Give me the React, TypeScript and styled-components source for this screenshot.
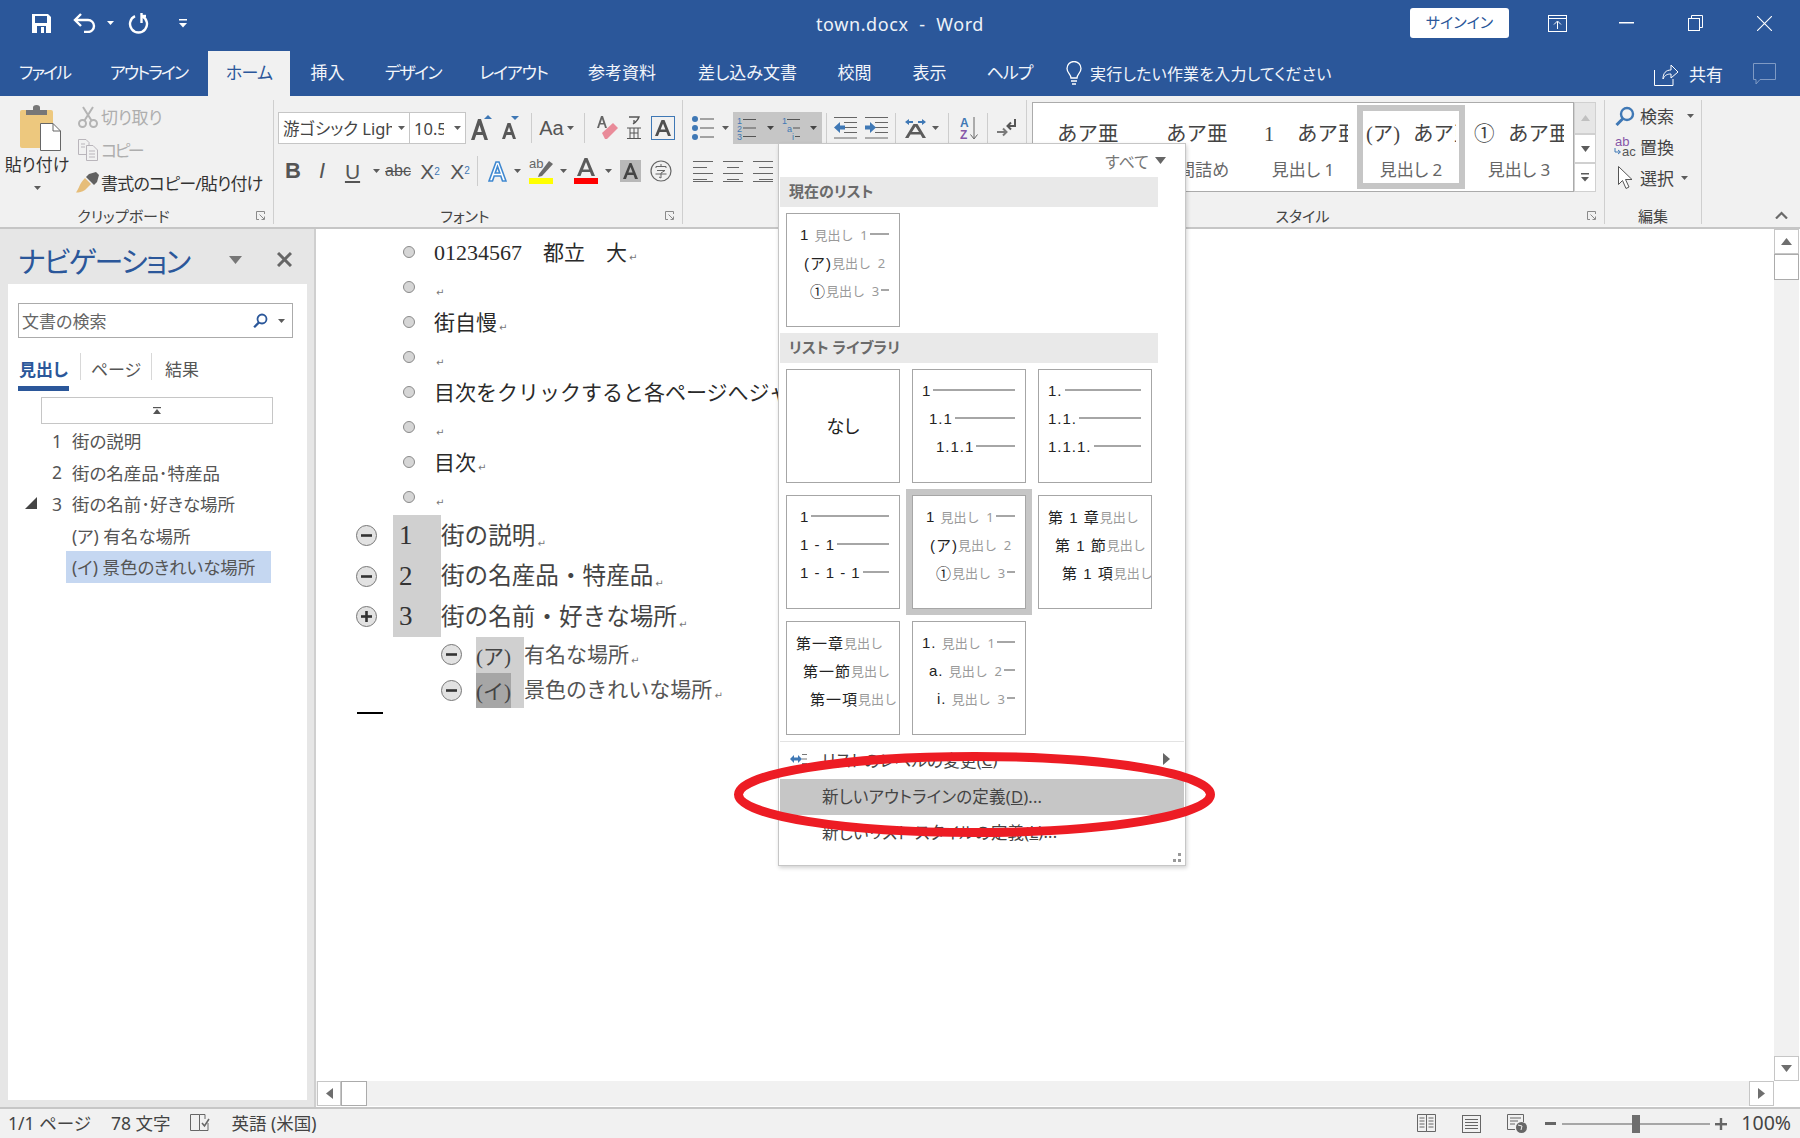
import * as React from 'react';
import styled, { createGlobalStyle } from 'styled-components';

const BLUE = '#2b579a';
const ICON = '#5c5c5c';
const ACCENT = '#3f78b5';
const UI_FONT = '"Noto Sans", "Noto Sans CJK JP", sans-serif';
const DOC_FONT = '"Liberation Serif", "Noto Sans CJK JP", serif';

const Global = createGlobalStyle`
  html, body { margin: 0; padding: 0; background: #fff; }
  body {
    width: 1800px;
    height: 1138px;
    overflow: hidden;
    font-family: ${UI_FONT};
    font-feature-settings: "palt";
    color: #444;
  }
  * { box-sizing: border-box; }
  svg { display: block; flex: none; }
`;

const Window = styled.div`
  position: relative;
  width: 1800px;
  height: 1138px;
  display: flex;
  flex-direction: column;
  overflow: hidden;
`;

/* title bar */
const TitleBar = styled.div`
  height: 51px;
  flex: none;
  background: ${BLUE};
  color: #fff;
  display: grid;
  grid-template-columns: 1fr auto 1fr;
  align-items: start;
`;
const Qat = styled.div`
  display: flex;
  align-items: center;
  height: 46px;
  padding-left: 32px;
`;
const Slot = styled.span<{ $ml?: number }>`
  display: inline-flex;
  flex: none;
  margin-left: ${p => p.$ml ?? 0}px;
`;
const Title = styled.div`
  font-size: 18px;
  line-height: 48px;
  letter-spacing: 0.6px;
  white-space: pre;
  color: #eef2f8;
`;
const WinControls = styled.div`
  display: flex;
  align-items: center;
  justify-content: flex-end;
  height: 46px;
`;
const SignIn = styled.div`
  width: 99px;
  height: 30px;
  margin-right: 39px;
  background: #fff;
  color: ${BLUE};
  border-radius: 3px;
  font-size: 15px;
  line-height: 29px;
  text-align: center;
`;
const WinSlot = styled.span<{ $w: number; $mr: number }>`
  display: inline-flex;
  justify-content: center;
  width: ${p => p.$w}px;
  margin-right: ${p => p.$mr}px;
`;

/* tabs */
const TabBar = styled.div`
  height: 45px;
  flex: none;
  background: ${BLUE};
  display: flex;
  align-items: stretch;
`;
const Tab = styled.div<{ $w: number; $ls: number; $active?: boolean }>`
  width: ${p => p.$w}px;
  flex: none;
  text-align: center;
  font-size: 17px;
  line-height: 43px;
  letter-spacing: ${p => p.$ls}px;
  white-space: nowrap;
  background: ${p => (p.$active ? '#f1f1f1' : 'transparent')};
  color: ${p => (p.$active ? BLUE : '#f2f5fa')};
`;
const TellMe = styled.div`
  display: flex;
  align-items: center;
  gap: 8px;
  margin-left: 14px;
  padding-bottom: 2px;
  font-size: 16px;
  letter-spacing: 0.2px;
  color: #f2f5fa;
  white-space: nowrap;
`;
const ShareArea = styled.div`
  margin-left: auto;
  display: flex;
  align-items: center;
  padding-right: 24px;
  font-size: 17px;
  color: #f2f5fa;
`;

/* ribbon */
const Ribbon = styled.div`
  height: 133px;
  flex: none;
  background: #f1f1f1;
  border-bottom: 2px solid #c6c6c6;
  display: flex;
  align-items: flex-start;
  padding-top: 4px;
`;
const Group = styled.div<{ $w: number }>`
  width: ${p => p.$w}px;
  height: 124px;
  flex: none;
  display: flex;
  flex-direction: column;
  border-right: 1px solid #cfcfcf;
`;
const GroupBody = styled.div`
  height: 105px;
  flex: none;
`;
const GroupFoot = styled.div`
  flex: 1;
  display: flex;
  align-items: center;
  font-size: 15px;
  color: #444;
`;
const GroupLabel = styled.div`
  flex: 1;
  text-align: center;
  white-space: nowrap;
`;
const Launcher = styled.div`
  width: 26px;
  padding-left: 9px;
  display: flex;
`;
const ToolRow = styled.div<{ $mt?: number }>`
  display: flex;
  align-items: center;
  height: 32px;
  margin-top: ${p => p.$mt ?? 0}px;
  white-space: nowrap;
`;
const Tool = styled.span<{ $w: number; $ml?: number; $size?: number; $bold?: boolean; $italic?: boolean }>`
  display: inline-flex;
  align-items: center;
  justify-content: center;
  flex: none;
  width: ${p => p.$w}px;
  margin-left: ${p => p.$ml ?? 0}px;
  font-family: "Liberation Sans", sans-serif;
  font-size: ${p => p.$size ?? 20}px;
  font-weight: ${p => (p.$bold ? 700 : 400)};
  font-style: ${p => (p.$italic ? 'italic' : 'normal')};
  color: #555;
  line-height: 1;
`;
const ToolSub = styled.span`
  font-size: 10px;
  color: ${ACCENT};
  align-self: flex-end;
  margin-bottom: 5px;
`;
const ToolSup = styled.span`
  font-size: 10px;
  color: ${ACCENT};
  align-self: flex-start;
  margin-top: 5px;
`;
const ToolSep = styled.span<{ $ml: number }>`
  flex: none;
  width: 1px;
  height: 30px;
  margin-left: ${p => p.$ml}px;
  background: #cdcdcd;
`;
const SelectBox = styled.div<{ $w: number; $ml?: number }>`
  width: ${p => p.$w}px;
  margin-left: ${p => p.$ml ?? 0}px;
  flex: none;
  height: 32px;
  background: #fff;
  border: 1px solid #c6c6c6;
  display: flex;
  align-items: center;
  padding: 0 4px;
  font-size: 16.5px;
  color: #444;
  overflow: hidden;
`;
const SelectText = styled.span<{ $mr: number }>`
  flex: 1;
  min-width: 0;
  margin-right: ${p => p.$mr}px;
  overflow: hidden;
  white-space: nowrap;
`;
const PressedTools = styled.div`
  flex: none;
  display: flex;
  align-items: center;
  width: 89px;
  height: 32px;
  margin-left: 4px;
  background: #c6c6c6;
`;

const Clipboard = styled(GroupBody)`
  display: flex;
`;
const PasteCol = styled.div`
  width: 74px;
  flex: none;
  padding-top: 5px;
  display: flex;
  flex-direction: column;
  align-items: center;
  font-size: 17px;
  line-height: 24px;
  color: #333;
`;
const PasteIconWrap = styled.div`
  margin-left: 8px;
`;
const PasteLabel = styled.div`
  margin-top: 2px;
  white-space: nowrap;
`;
const PasteCaret = styled.div`
  margin-top: 9px;
`;
const ClipCol = styled.div`
  display: flex;
  flex-direction: column;
`;
const ClipRow = styled.div<{ $off?: boolean; $ls: number }>`
  display: flex;
  align-items: center;
  height: 33px;
  font-size: 17px;
  letter-spacing: ${p => p.$ls}px;
  white-space: nowrap;
  color: ${p => (p.$off ? '#aeaeae' : '#333')};
`;
const ClipIcon = styled.span`
  width: 27px;
  display: inline-flex;
  justify-content: center;
  flex: none;
`;

const Gallery = styled.div`
  display: flex;
  margin: 2px 0 0 5px;
`;
const GalleryItems = styled.div`
  display: grid;
  grid-template-columns: repeat(5, 108px);
  width: 542px;
  height: 90px;
  background: #fff;
  border: 1px solid #ababab;
`;
const StyleCell = styled.div<{ $on?: boolean }>`
  height: 84px;
  margin-top: 2px;
  padding: 0 3px;
  border: 6px solid ${p => (p.$on ? '#c6c6c6' : 'transparent')};
  overflow: hidden;
  text-align: center;
`;
const StylePreview = styled.div<{ $pl: number }>`
  display: flex;
  height: 46px;
  padding-left: ${p => p.$pl}px;
  line-height: 46px;
  font-size: 20.5px;
  font-family: ${DOC_FONT};
  color: #444;
  white-space: pre;
  text-align: left;
  overflow: hidden;
  font-feature-settings: normal;
`;
const StyleMark = styled.span<{ $w: number }>`
  width: ${p => p.$w}px;
  flex: none;
`;
const StyleName = styled.div`
  font-size: 17px;
  line-height: 26px;
  color: #666;
  white-space: nowrap;
`;
const GalleryScroll = styled.div`
  width: 22px;
  display: flex;
  flex-direction: column;
`;
const GalleryBtn = styled.div<{ $h: number; $off?: boolean }>`
  height: ${p => p.$h}px;
  background: ${p => (p.$off ? '#e6e6e6' : '#fff')};
  border: 1px solid #d0d0d0;
  display: flex;
  align-items: center;
  justify-content: center;
`;

const EditCol = styled(GroupBody)`
  padding-left: 8px;
`;
const EditRow = styled.div`
  display: flex;
  align-items: center;
  height: 31px;
  font-size: 17px;
  color: #444;
  white-space: nowrap;
`;
const EditIcon = styled.span`
  width: 24px;
  margin-right: 3px;
  display: inline-flex;
  justify-content: center;
  flex: none;
`;
const Collapse = styled.div`
  flex: 1;
  height: 124px;
  display: flex;
  align-items: flex-end;
  justify-content: flex-end;
  padding: 0 12px 5px 0;
`;

/* body */
const Body = styled.div`
  flex: 1;
  min-height: 0;
  display: flex;
`;
const NavPane = styled.div`
  width: 316px;
  flex: none;
  background: #e6e6e6;
  border-right: 2px solid #cfcfcf;
  display: flex;
  flex-direction: column;
`;
const NavHead = styled.div`
  height: 55px;
  flex: none;
  display: flex;
  align-items: center;
  padding: 6px 0 0 18px;
`;
const NavTitle = styled.div`
  font-size: 29px;
  letter-spacing: -1.9px;
  color: ${BLUE};
  width: 211px;
  white-space: nowrap;
`;
const NavClose = styled.span`
  margin-left: 35px;
  display: inline-flex;
`;
const NavPanel = styled.div`
  flex: 1;
  margin: 0 7px 7px 8px;
  background: #fff;
  padding-top: 19px;
`;
const NavSearch = styled.div`
  width: 275px;
  height: 35px;
  margin-left: 10px;
  border: 1px solid #ababab;
  display: flex;
  align-items: center;
  padding: 0 7px 0 3px;
  font-size: 17px;
  color: #666;
`;
const NavSearchText = styled.span`
  flex: 1;
`;
const NavTabs = styled.div`
  display: flex;
  align-items: stretch;
  margin: 15px 0 0 10px;
  height: 38px;
`;
const NavTab = styled.div<{ $on?: boolean; $w: number }>`
  width: ${p => p.$w}px;
  height: 38px;
  text-align: center;
  font-size: 17px;
  line-height: 33px;
  font-weight: ${p => (p.$on ? 700 : 400)};
  color: ${p => (p.$on ? BLUE : '#555')};
  border-bottom: 5px solid ${p => (p.$on ? BLUE : 'transparent')};
`;
const NavTabSep = styled.span<{ $ml?: number }>`
  width: 1px;
  height: 27px;
  margin-left: ${p => p.$ml ?? 0}px;
  background: #d8d8d8;
`;
const NavScrollUp = styled.div`
  width: 232px;
  height: 27px;
  margin: 6px 0 0 33px;
  border: 1px solid #c6c6c6;
  display: flex;
  align-items: center;
  justify-content: center;
`;
const NavTree = styled.div`
  margin-top: 1px;
`;
const NavItem = styled.div<{ $indent: number; $on?: boolean }>`
  display: flex;
  align-items: center;
  position: relative;
  height: 31.5px;
  margin-left: ${p => p.$indent}px;
  width: ${p => 263 - p.$indent}px;
  padding-left: ${p => (p.$on ? 6 : 0)}px;
  background: ${p => (p.$on ? '#c5d7f1' : 'transparent')};
  font-size: 17.5px;
  color: #555;
  white-space: nowrap;
`;
const NavNum = styled.span`
  width: 20px;
  flex: none;
`;
const NavArrow = styled.span`
  position: absolute;
  left: -27px;
  top: 9px;
  display: inline-flex;
`;

const DocColumn = styled.div`
  flex: 1;
  min-width: 0;
  display: flex;
  flex-direction: column;
`;
const DocArea = styled.div`
  flex: 1;
  min-height: 0;
  display: flex;
`;
const Page = styled.div`
  flex: 1;
  padding-top: 6px;
  font-family: ${DOC_FONT};
  font-feature-settings: normal;
  color: #2a2a2a;
`;
const BodyRow = styled.div`
  display: flex;
  align-items: center;
  height: 35px;
  padding-left: 87px;
  font-size: 21px;
  white-space: pre;
`;
const Bullet = styled.span`
  width: 12px;
  height: 12px;
  flex: none;
  margin: -2px 19px 0 0;
  border-radius: 50%;
  background: #d6d6d6;
  border: 1px solid #8a8a8a;
`;
const RowText = styled.span`
  margin-top: -4px;
`;
const Digits = styled.span`
  font-size: 22px;
`;
const Ret = styled.span`
  font-family: "DejaVu Sans", sans-serif;
  font-size: 10px;
  color: #777;
  align-self: flex-end;
  margin: 0 0 7px 2px;
`;
const HeadRow = styled.div<{ $h: number }>`
  display: flex;
  align-items: center;
  height: ${p => p.$h}px;
  padding-left: 40px;
  font-size: 23.6px;
  color: #444;
  white-space: pre;
`;
const SubRow = styled.div`
  display: flex;
  align-items: center;
  height: 35.5px;
  padding-left: 125px;
  font-size: 21px;
  color: #555;
  white-space: pre;
`;
const Toggle = styled.span`
  width: 21px;
  height: 21px;
  flex: none;
  border-radius: 50%;
  background: #e2e2e2;
  border: 1px solid #777;
  display: inline-flex;
  align-items: center;
  justify-content: center;
`;
const NumBlock = styled.span<{ $w: number; $ml: number }>`
  width: ${p => p.$w}px;
  margin-left: ${p => p.$ml}px;
  height: 100%;
  flex: none;
  background: #d0d0d0;
  display: flex;
  align-items: center;
`;
const HeadNum = styled.span`
  padding-left: 6px;
  font-size: 27px;
  color: #333;
`;
const SubNum = styled.span<{ $dark?: boolean }>`
  width: 35px;
  height: 100%;
  display: flex;
  align-items: center;
  justify-content: center;
  color: #444;
  background: ${p => (p.$dark ? '#a6a6a6' : 'transparent')};
`;
const EndMark = styled.div`
  width: 26px;
  height: 2px;
  margin: 4px 0 0 41px;
  background: #000;
`;

const VScroll = styled.div`
  width: 25px;
  margin-right: 1px;
  flex: none;
  background: #f1f1f1;
  display: flex;
  flex-direction: column;
`;
const ScrollBtn = styled.div<{ $h?: number; $w?: number }>`
  width: ${p => (p.$w ? `${p.$w}px` : '100%')};
  height: ${p => (p.$h ? `${p.$h}px` : '100%')};
  flex: none;
  background: #fff;
  border: 1px solid #c6c6c6;
  display: flex;
  align-items: center;
  justify-content: center;
`;
const ScrollThumb = styled(ScrollBtn)`
  border-color: #ababab;
`;
const Track = styled.div`
  flex: 1;
`;
const HScroll = styled.div`
  height: 25px;
  flex: none;
  background: #f1f1f1;
  margin-bottom: 1px;
  display: flex;
  padding-left: 1px;
`;
const HEnd = styled.div`
  width: 26px;
  flex: none;
  background: #fff;
`;

/* status bar */
const StatusBar = styled.div`
  height: 31px;
  flex: none;
  background: #f1f1f1;
  border-top: 2px solid #c6c6c6;
  display: flex;
  align-items: center;
  font-size: 17.5px;
  color: #444;
  white-space: pre;
`;
const StatusText = styled.span<{ $ml: number }>`
  margin: -3px 0 0 ${p => p.$ml}px;
  flex: none;
`;
const StatusIcon = styled.span<{ $ml: number }>`
  margin-left: ${p => p.$ml}px;
  display: inline-flex;
  flex: none;
`;
const StatusRight = styled.div`
  margin-left: auto;
  display: flex;
  align-items: center;
  padding-right: 9px;
`;
const ZoomTrack = styled.div`
  width: 148px;
  height: 2px;
  margin-left: 6px;
  background: #a6a6a6;
  position: relative;
  flex: none;
`;
const ZoomThumb = styled.span`
  position: absolute;
  left: 70px;
  top: -8px;
  width: 8px;
  height: 18px;
  background: #6e6e6e;
`;
const ZoomLabel = styled.span`
  margin: -2px 0 0 14px;
  font-size: 19.5px;
  flex: none;
`;

/* dropdown */
const Menu = styled.div`
  position: absolute;
  left: 778px;
  top: 143px;
  width: 408px;
  height: 723px;
  background: #fff;
  border: 1px solid #c6c6c6;
  box-shadow: 1px 2px 4px rgba(0, 0, 0, 0.18);
  display: flex;
  flex-direction: column;
  z-index: 5;
`;
const MenuFilter = styled.div`
  height: 33px;
  flex: none;
  display: flex;
  align-items: center;
  justify-content: flex-end;
  gap: 6px;
  padding-right: 19px;
  font-size: 16px;
  color: #777;
`;
const MenuHeader = styled.div<{ $mt?: number }>`
  width: 378px;
  height: 30px;
  flex: none;
  margin: ${p => p.$mt ?? 0}px 0 0 1px;
  padding-left: 9px;
  background: #e9e9e9;
  font-size: 15px;
  line-height: 29px;
  font-weight: 700;
  color: #6a6a6a;
`;
const ThumbGrid = styled.div`
  display: grid;
  grid-template-columns: repeat(3, 114px);
  grid-auto-rows: 114px;
  gap: 12px;
  margin: 6px 0 0 7px;
`;
const Thumb = styled.div<{ $on?: boolean }>`
  border: 1px solid #a6a6a6;
  outline: ${p => (p.$on ? '6px solid #c6c6c6' : 'none')};
  padding-top: 6px;
  overflow: hidden;
`;
const ThumbNone = styled(Thumb)`
  padding: 0 0 2px;
  display: flex;
  align-items: center;
  justify-content: center;
  font-size: 18px;
  color: #222;
`;
const ThumbRow = styled.div<{ $indent: number }>`
  display: flex;
  align-items: center;
  height: 28px;
  padding: 0 10px 0 ${p => p.$indent}px;
  white-space: pre;
  overflow: hidden;
  color: #222;
  font-feature-settings: normal;
`;
const ThumbNum = styled.span`
  font-family: "Liberation Sans", "Noto Sans CJK JP", sans-serif;
  font-size: 15px;
  letter-spacing: 1px;
  flex: none;
`;
const ThumbText = styled.span`
  color: #9a9a9a;
  font-size: 13px;
  flex: none;
`;
const ThumbLine = styled.span`
  flex: 1;
  min-width: 0;
  height: 2px;
  margin-left: 2px;
  background: #a6a6a6;
`;
const MenuDivider = styled.div`
  height: 1px;
  flex: none;
  margin: 6px 1px 0;
  background: #e3e3e3;
`;
const MenuItem = styled.div<{ $on?: boolean; $h: number }>`
  height: ${p => p.$h}px;
  flex: none;
  margin: 0 1px;
  display: flex;
  align-items: center;
  padding: 0 0 2px 42px;
  position: relative;
  font-size: 16.5px;
  letter-spacing: 0.2px;
  color: #444;
  white-space: nowrap;
  background: ${p => (p.$on ? '#c6c6c6' : 'transparent')};
`;
const MenuItemIcon = styled.span`
  position: absolute;
  left: 10px;
  top: 11px;
  display: inline-flex;
`;
const MenuItemArrow = styled.span`
  position: absolute;
  right: 14px;
  top: 11px;
  display: inline-flex;
`;
const MenuGrip = styled.div`
  flex: 1;
  display: flex;
  align-items: flex-end;
  justify-content: flex-end;
  padding: 0 4px 3px 0;
`;
const Underlined = styled.span`
  text-decoration: underline;
`;
const RedCircle = styled.svg`
  position: absolute;
  left: 730px;
  top: 748px;
  z-index: 6;
  pointer-events: none;
`;

/* icons */
const Caret = ({ w = 7, color = ICON, up, side }: { w?: number; color?: string; up?: boolean; side?: 'l' | 'r' }) => {
  const h = Math.ceil(w * 0.57);
  if (side) {
    return (
      <svg width={h} height={w} viewBox={`0 0 ${h} ${w}`}>
        <path d={side === 'r' ? `M0 0L${h} ${w / 2}L0 ${w}z` : `M${h} 0L0 ${w / 2}L${h} ${w}z`} fill={color} />
      </svg>
    );
  }
  return (
    <svg width={w} height={h} viewBox={`0 0 ${w} ${h}`}>
      <path d={up ? `M0 ${h}L${w / 2} 0L${w} ${h}z` : `M0 0H${w}L${w / 2} ${h}z`} fill={color} />
    </svg>
  );
};

const LauncherIcon = () => (
  <svg width="9" height="9" viewBox="0 0 9 9" fill="none" stroke="#8a8a8a">
    <path d="M8.5 3V0.5H0.5V8.5H3" />
    <path d="M3.5 3.5L8 8M8.5 5.5V8.5H5.5" />
  </svg>
);

const SaveIcon = () => (
  <svg width="19" height="19" viewBox="0 0 19 19">
    <path fill="#fff" d="M0 0H16L19 3V19H0z" />
    <rect x="3" y="2" width="12" height="7" fill={BLUE} />
    <rect x="5" y="12" width="9" height="7" fill={BLUE} />
    <rect x="9" y="13" width="3" height="6" fill="#fff" />
  </svg>
);
const UndoIcon = () => (
  <svg width="23" height="20" viewBox="0 0 23 20" fill="none" stroke="#fff" strokeWidth="2.4">
    <path d="M8 1L2 7L8 13" />
    <path d="M2 7H15a6 6 0 0 1 0 12H11" />
  </svg>
);
const RedoIcon = () => (
  <svg width="21" height="21" viewBox="0 0 21 21" fill="none" stroke="#fff" strokeWidth="2.4">
    <path d="M14 3.2A8.5 8.5 0 1 1 7 3.2" />
    <path d="M13.5 0V10" />
    <path d="M13 3H18" />
  </svg>
);
const MoreIcon = ({ color = '#fff' }: { color?: string }) => (
  <svg width="8" height="9" viewBox="0 0 8 9" fill={color}>
    <rect width="8" height="1.5" />
    <path d="M0 4H8L4 8.5z" />
  </svg>
);
const RibbonDisplay = () => (
  <svg width="19" height="17" viewBox="0 0 19 17" fill="none" stroke="#fff">
    <rect x="0.5" y="0.5" width="18" height="16" />
    <path d="M0 3.5H19M9.5 14V6.5M6 9.5L9.5 6L13 9.5" />
  </svg>
);
const Minimize = () => (
  <svg width="15" height="2" viewBox="0 0 15 2">
    <rect width="15" height="1.5" fill="#fff" />
  </svg>
);
const Restore = () => (
  <svg width="15" height="16" viewBox="0 0 15 16" fill="none" stroke="#fff">
    <rect x="0.5" y="3.5" width="11" height="12" />
    <path d="M3.5 3.5V0.5H14.5V12.5H11.5" />
  </svg>
);
const CloseIcon = () => (
  <svg width="15" height="15" viewBox="0 0 15 15" stroke="#fff" strokeWidth="1.1">
    <path d="M0 0L15 15M15 0L0 15" />
  </svg>
);
const Bulb = () => (
  <svg width="16" height="24" viewBox="0 0 16 24" fill="none" stroke="#fff" strokeWidth="1.3">
    <path d="M5 17C5 13 1 12 1 7.5a7 7 0 0 1 14 0C15 12 11 13 11 17z" />
    <path d="M5 20H11M6 23H10" />
  </svg>
);
const ShareIcon = () => (
  <svg width="25" height="24" viewBox="0 0 25 24" fill="none" stroke="#fff" strokeWidth="1">
    <path d="M0.5 8V23.5H19V17" />
    <path d="M9 17C9 11 12 8 17 8V3L24 10L17 16V12C13 12 11 13 9 17z" />
  </svg>
);
const CommentIcon = () => (
  <svg width="23" height="22" viewBox="0 0 23 22" fill="none" stroke="#7f9ac4" strokeWidth="1">
    <path d="M0.5 0.5H22.5V16.5H7L3 21V16.5H0.5z" />
  </svg>
);

const ClipboardIcon = () => (
  <svg width="42" height="46" viewBox="0 0 42 46">
    <rect x="0" y="5" width="33" height="38" rx="2" fill="#edc87e" />
    <path d="M6 5H13V2.5a3.5 2.5 0 0 1 7 0V5H27V10H6z" fill="#777" />
    <path d="M20.5 18.5H33L40.5 26V45.5H20.5z" fill="#fff" stroke="#666" />
    <path d="M33 18.5V26H40.5" fill="none" stroke="#666" />
  </svg>
);
const ScissorsIcon = () => (
  <svg width="20" height="22" viewBox="0 0 20 22" fill="none" stroke="#b4b4b4" strokeWidth="2">
    <circle cx="4.5" cy="17.5" r="3.5" />
    <circle cx="15.5" cy="17.5" r="3.5" />
    <path d="M6.5 14.5L15 1M13.5 14.5L5 1" />
  </svg>
);
const CopyIcon = () => (
  <svg width="20" height="22" viewBox="0 0 20 22" fill="#f1f1f1" stroke="#b9b5bb">
    <path d="M0.5 0.5H8L11 3.5V15.5H0.5z" />
    <path d="M8.5 6.5H15L19.5 11V21.5H8.5z" />
    <path d="M3 5H7M3 8H7M11 12H17M11 15H17M11 18H17" />
  </svg>
);
const BrushIcon = () => (
  <svg width="23" height="21" viewBox="0 0 23 21">
    <path d="M9 6L15 12L9 18C6 20 3 20.5 0 20.5C3 17 3 12 9 6z" fill="#e6bd79" />
    <path d="M10 5L13 2L20 0L23 3L21 10L18 13z" fill="#616161" />
  </svg>
);
const GrowIcon = () => (
  <svg width="24" height="26" viewBox="0 0 24 26">
    <path d="M0 25L7 4H10L17 25H13.5L11.8 20H5.2L3.5 25zM6.3 17H10.7L8.5 10z" fill="#585858" />
    <path d="M13 4L17 0L21 4z" fill={ACCENT} />
  </svg>
);
const ShrinkIcon = () => (
  <svg width="20" height="24" viewBox="0 0 20 24">
    <path d="M0 23L5.5 7H8.5L14 23H11L9.6 19H4.4L3 23zM5.3 16H8.7L7 11z" fill="#585858" />
    <path d="M9 0H17L13 4z" fill={ACCENT} />
  </svg>
);
const EraserIcon = () => (
  <svg width="22" height="26" viewBox="0 0 22 26">
    <path d="M1 13L5 1H7L11 13H9L8 9.5H4L3 13zM4.7 8H7.3L6 4z" fill="#666" />
    <path d="M6 18L17 8L22 13L11 24H9z" fill="#e98b99" />
  </svg>
);
const FuriganaIcon = () => (
  <svg width="14" height="24" viewBox="0 0 14 24" fill="none" stroke="#555" strokeWidth="1">
    <path d="M2 1H12C11 4 9 6 6 8M7 4V7" strokeWidth="1.3" />
    <path d="M0 12H14M0 22.5H14M3 12V22M11 12V22M7 12V22M3 17H11" />
  </svg>
);
const TextBorderIcon = () => (
  <svg width="24" height="24" viewBox="0 0 24 24">
    <rect x="0.5" y="0.5" width="23" height="23" fill="none" stroke={ACCENT} />
    <path d="M4 20L10.5 4H13.5L20 20H17L15.4 16H8.6L7 20zM9.6 13.5H14.4L12 7.5z" fill="#505050" />
  </svg>
);
const TextEffectIcon = () => (
  <svg width="19" height="22" viewBox="0 0 19 22">
    <path d="M1 21L8 2H11L18 21H14.5L12.8 16H6.2L4.5 21zM7.2 13H11.8L9.5 6.5z" fill="#fff" stroke="#3f88d0" strokeWidth="1.6" />
  </svg>
);
const HighlightIcon = () => (
  <svg width="24" height="26" viewBox="0 0 24 26">
    <text x="0" y="10" fontFamily="Liberation Sans" fontSize="13" fill="#666">ab</text>
    <path d="M10 16L20 3L24 6L13 18L9 19z" fill="#6b6b6b" />
    <rect x="0" y="20" width="24" height="6" fill="#ffff00" />
  </svg>
);
const FontColorIcon = () => (
  <svg width="24" height="26" viewBox="0 0 24 26">
    <path d="M3 18L10.5 0H13.5L21 18H17.5L16 14H8L6.5 18zM9 11.5H15L12 4z" fill="#5c5c5c" />
    <rect x="0" y="20" width="24" height="6" fill="#ff0000" />
  </svg>
);
const ShadeIcon = () => (
  <svg width="21" height="22" viewBox="0 0 21 22">
    <rect width="21" height="22" fill="#b8b8b8" />
    <path d="M3 19L9.5 3H11.5L18 19H15L13.6 15H7.4L6 19zM8.4 12.5H12.6L10.5 7z" fill="#444" />
  </svg>
);
const EnclosedIcon = () => (
  <svg width="22" height="22" viewBox="0 0 22 22" fill="none" stroke="#666" strokeWidth="1.2">
    <circle cx="11" cy="11" r="10" />
    <path d="M6 8V6.5H16V8M11 4V6M7 10.5H15L11 13M11 13V18L9 17M5.5 14H16.5" strokeWidth="1" />
  </svg>
);
const BulletsIcon = () => (
  <svg width="22" height="24" viewBox="0 0 22 24">
    <circle cx="3" cy="3" r="3" fill={ACCENT} />
    <circle cx="3" cy="12" r="3" fill={ACCENT} />
    <circle cx="3" cy="21" r="3" fill={ACCENT} />
    <path d="M8 3H22M8 12H22M8 21H22" stroke="#555" />
  </svg>
);
const NumberedIcon = () => (
  <svg width="19" height="24" viewBox="0 0 19 24">
    <text x="0" y="8" fontFamily="Liberation Sans" fontSize="9" fill={ACCENT}>1</text>
    <text x="0" y="16" fontFamily="Liberation Sans" fontSize="9" fill={ACCENT}>2</text>
    <text x="0" y="24" fontFamily="Liberation Sans" fontSize="9" fill={ACCENT}>3</text>
    <path d="M6 3.5H19M6 12H19M6 20.5H19" stroke="#555" />
  </svg>
);
const MultilevelIcon = () => (
  <svg width="18" height="24" viewBox="0 0 18 24">
    <text x="0" y="8" fontFamily="Liberation Sans" fontSize="9" fill={ACCENT}>1</text>
    <text x="5" y="16" fontFamily="Liberation Sans" fontSize="9" fill={ACCENT}>a</text>
    <text x="10" y="24" fontFamily="Liberation Sans" fontSize="9" fill={ACCENT}>i</text>
    <path d="M5 3.5H18M11 12H18M13 20.5H18" stroke="#555" />
  </svg>
);
const IndentIcon = ({ out }: { out?: boolean }) => (
  <svg width="23" height="22" viewBox="0 0 23 22">
    <path d="M0 0.5H23M10 5.5H23M10 10.5H23M10 15.5H23M0 21H23" stroke="#666" />
    <path d={out ? 'M0 10.5L6 5V8.5H11V12.5H6V16z' : 'M11 10.5L5 5V8.5H0V12.5H5V16z'} fill={ACCENT} />
  </svg>
);
const DirectionIcon = () => (
  <svg width="23" height="20" viewBox="0 0 23 20">
    <path d="M1 4L5 1V3H9V5H5V7zM22 4L18 1V3H14V5H18V7z" fill={ACCENT} />
    <path d="M1 20L9.5 6H13.5L22 20H18.5L16.5 16.5H6.5L4.5 20zM8 14H15L11.5 8.5z" fill="#5c5c5c" />
  </svg>
);
const SortIcon = () => (
  <svg width="18" height="24" viewBox="0 0 18 24">
    <text x="0" y="11" fontFamily="Liberation Sans" fontWeight="700" fontSize="12" fill={ACCENT}>A</text>
    <text x="0" y="23" fontFamily="Liberation Sans" fontWeight="700" fontSize="12" fill="#8656a8">Z</text>
    <path d="M14 1V22M10.5 18.5L14 23L17.5 18.5" fill="none" stroke="#666" />
  </svg>
);
const ParaMarkIcon = () => (
  <svg width="20" height="20" viewBox="0 0 20 20" fill="none">
    <path d="M18 1V8H11M14 4.5L10.5 8L14 11.5" stroke="#555" strokeWidth="2" />
    <path d="M0 14H9M6 10.5L9.5 14L6 17.5" stroke="#7a7a7a" strokeWidth="2" />
  </svg>
);
const AlignIcon = ({ mode }: { mode: 'l' | 'c' | 'r' }) => {
  const short = mode === 'c' ? 'M4 6.5H16M4 18.5H16' : mode === 'r' ? 'M6 6.5H20M6 18.5H20' : 'M0 6.5H14M0 18.5H14';
  return (
    <svg width="20" height="21" viewBox="0 0 20 21">
      <path d="M0 0.5H20M0 12.5H20" stroke="#666" />
      <path d={short} stroke="#666" />
      <path d="M0 20.5H20" stroke="#666" />
    </svg>
  );
};
const FindIcon = ({ size = 20, color = ACCENT }: { size?: number; color?: string }) => (
  <svg width={size} height={size} viewBox="0 0 20 20" fill="none" stroke={color}>
    <circle cx="12" cy="8" r="6" strokeWidth="2.4" />
    <path d="M8 12.5L1.5 19" strokeWidth="3" />
  </svg>
);
const ReplaceIcon = () => (
  <svg width="23" height="20" viewBox="0 0 23 20">
    <text x="1" y="9" fontFamily="Liberation Sans" fontSize="13" fill="#8656a8">ab</text>
    <text x="8" y="19" fontFamily="Liberation Sans" fontSize="13" fill="#555">ac</text>
    <path d="M1 11V15H6M4 13L6.5 15L4 17" fill="none" stroke={ACCENT} />
  </svg>
);
const SelectIcon = () => (
  <svg width="15" height="23" viewBox="0 0 15 23" fill="#fff" stroke="#555">
    <path d="M0.5 0.5V18.5L4.5 14.5L8 22.5L11 21L7.5 13.5H14z" />
  </svg>
);
const CollapseIcon = () => (
  <svg width="13" height="8" viewBox="0 0 13 8" fill="none" stroke="#6a6a6a" strokeWidth="2.2">
    <path d="M1 7.5L6.5 2L12 7.5" />
  </svg>
);
const NavCloseIcon = () => (
  <svg width="15" height="15" viewBox="0 0 15 15" stroke="#666" strokeWidth="3">
    <path d="M1 1L14 14M14 1L1 14" />
  </svg>
);
const NavTopIcon = () => (
  <svg width="8" height="7" viewBox="0 0 8 7" fill="#555">
    <rect width="8" height="1.2" />
    <path d="M4 2L8 7H0z" />
  </svg>
);
const NavCorner = () => (
  <svg width="12" height="12" viewBox="0 0 12 12">
    <path d="M12 0V12H0z" fill="#444" />
  </svg>
);
const ToggleMark = ({ plus }: { plus?: boolean }) => (
  <svg width="11" height="11" viewBox="0 0 11 11" stroke="#333" strokeWidth="2.6">
    <path d="M0 5.5H11" />
    {plus && <path d="M5.5 0V11" />}
  </svg>
);
const LevelIcon = () => (
  <svg width="17" height="12" viewBox="0 0 17 12">
    <path d="M0 6L4 2V4.5H8V7.5H4V10zM12 6L8 2V10z" fill={ACCENT} />
    <path d="M12 1.5H17M12 6H17M12 10.5H17" stroke="#777" />
  </svg>
);
const GripIcon = () => (
  <svg width="8" height="9" viewBox="0 0 8 9" fill="#999">
    <rect x="5" y="0" width="3" height="3" />
    <rect x="0" y="6" width="3" height="3" />
    <rect x="5" y="6" width="3" height="3" />
  </svg>
);
const ProofIcon = () => (
  <svg width="20" height="19" viewBox="0 0 20 19" fill="none" stroke="#666">
    <path d="M0.5 0.5H9.5V16.5H0.5zM9.5 0.5H15V5M9.5 16.5H18V9" />
    <path d="M12 9L14.5 12L19 5" strokeWidth="1.6" />
  </svg>
);
const ReadIcon = () => (
  <svg width="19" height="19" viewBox="0 0 19 19" fill="none" stroke="#666">
    <path d="M0.5 0.5H9.5V17.5H0.5zM9.5 0.5H18.5V17.5H9.5zM2.5 4H7.5M2.5 7H7.5M2.5 10H7.5M2.5 13H7.5M11.5 4H16.5M11.5 7H16.5M11.5 10H16.5M11.5 13H16.5" />
  </svg>
);
const PrintIcon = () => (
  <svg width="19" height="18" viewBox="0 0 19 18" fill="none" stroke="#666">
    <rect x="0.5" y="0.5" width="18" height="17" />
    <path d="M3 4.5H16M3 7.5H16M3 10.5H16M3 13.5H16" />
  </svg>
);
const WebIcon = () => (
  <svg width="20" height="19" viewBox="0 0 20 19" fill="none" stroke="#666">
    <path d="M0.5 0.5H16.5V8M0.5 0.5V15.5H8" />
    <path d="M3 4H14M3 7H11M3 10H8" />
    <circle cx="14.5" cy="13.5" r="5.5" fill="#666" stroke="none" />
    <path d="M11 11L15 12L14 16" stroke="#f1f1f1" />
  </svg>
);
const ZoomOut = () => (
  <svg width="11" height="3" viewBox="0 0 11 3">
    <rect width="11" height="3" fill="#666" />
  </svg>
);
const ZoomIn = () => (
  <svg width="12" height="12" viewBox="0 0 12 12" fill="#666">
    <rect y="5" width="12" height="2.4" />
    <rect x="4.8" width="2.4" height="12" />
  </svg>
);

/* data */
const TABS: [string, number, number][] = [
  ['ファイル', 89, -2], ['アウトライン', 119, -2], ['ホーム', 82, -0.8], ['挿入', 75, 0], ['デザイン', 96, -1.5], ['レイアウト', 105, -1.2],
  ['参考資料', 112, 0], ['差し込み文書', 139, 0], ['校閲', 75, 0], ['表示', 75, 0], ['ヘルプ', 85, -1],
];

const BODY_LINES: React.ReactNode[] = [
  <><Digits>01234567</Digits>　都立　大</>,
  '',
  '街自慢',
  '',
  '目次をクリックすると各ページへジャンプ',
  '',
  '目次',
  '',
];

type RowSpec = { indent: number; num: string; text?: string; line?: boolean };

const heading = (a: string, b: string, c: string, pad = 13, second = 17, third = 23, midLine = false): RowSpec[] => [
  { indent: pad, num: a, text: '見出し  1', line: true },
  { indent: second, num: b, text: '見出し  2', line: midLine },
  { indent: third, num: c, text: '見出し  3', line: true },
];
const plain = (indents: number[], nums: string[]): RowSpec[] =>
  nums.map((num, i) => ({ indent: indents[i], num, line: true }));
const chapter = (nums: string[]): RowSpec[] =>
  nums.map((num, i) => ({ indent: 9 + i * 7, num, text: '見出し' }));

const ThumbBody = ({ rows }: { rows: RowSpec[] }) => (
  <>
    {rows.map((r, i) => (
      <ThumbRow key={i} $indent={r.indent}>
        <ThumbNum>{r.num}</ThumbNum>
        {r.text && <ThumbText>{r.text}</ThumbText>}
        {r.line && <ThumbLine />}
      </ThumbRow>
    ))}
  </>
);

const STYLE_CELLS: { pl: number; mark?: string; markW?: number; name: string; on?: boolean }[] = [
  { pl: 15, name: '標準' },
  { pl: 16, name: '行間詰め' },
  { pl: 6, mark: '1', markW: 33, name: '見出し 1' },
  { pl: 0, mark: '(ア)', markW: 47, name: '見出し 2', on: true },
  { pl: 0, mark: '①', markW: 34, name: '見出し 3' },
];

export default function App() {
  return (
    <Window>
      <Global />
      <TitleBar>
        <Qat>
          <Slot><SaveIcon /></Slot>
          <Slot $ml={22}><UndoIcon /></Slot>
          <Slot $ml={11}><Caret color="#fff" /></Slot>
          <Slot $ml={14}><RedoIcon /></Slot>
          <Slot $ml={30}><MoreIcon /></Slot>
        </Qat>
        <Title>town.docx  -  Word</Title>
        <WinControls>
          <SignIn>サインイン</SignIn>
          <WinSlot $w={19} $mr={52}><RibbonDisplay /></WinSlot>
          <WinSlot $w={15} $mr={54}><Minimize /></WinSlot>
          <WinSlot $w={15} $mr={54}><Restore /></WinSlot>
          <WinSlot $w={15} $mr={28}><CloseIcon /></WinSlot>
        </WinControls>
      </TitleBar>

      <TabBar>
        {TABS.map(([label, w, ls]) => (
          <Tab key={label} $w={w} $ls={ls} $active={label === 'ホーム'}>{label}</Tab>
        ))}
        <TellMe><Bulb />実行したい作業を入力してください</TellMe>
        <ShareArea>
          <ShareIcon />
          <Slot $ml={10}>共有</Slot>
          <Slot $ml={30}><CommentIcon /></Slot>
        </ShareArea>
      </TabBar>

      <Ribbon>
        <Group $w={274}>
          <Clipboard>
            <PasteCol>
              <PasteIconWrap><ClipboardIcon /></PasteIconWrap>
              <PasteLabel>貼り付け</PasteLabel>
              <PasteCaret><Caret /></PasteCaret>
            </PasteCol>
            <ClipCol>
              <ClipRow $off $ls={-0.3}><ClipIcon><ScissorsIcon /></ClipIcon>切り取り</ClipRow>
              <ClipRow $off $ls={-2.5}><ClipIcon><CopyIcon /></ClipIcon>コピー</ClipRow>
              <ClipRow $ls={-0.8}><ClipIcon><BrushIcon /></ClipIcon>書式のコピー/貼り付け</ClipRow>
            </ClipCol>
          </Clipboard>
          <GroupFoot>
            <GroupLabel>クリップボード</GroupLabel>
            <Launcher><LauncherIcon /></Launcher>
          </GroupFoot>
        </Group>

        <Group $w={409}>
          <GroupBody>
            <ToolRow $mt={12}>
              <SelectBox $w={132} $ml={4}>
                <SelectText $mr={6}>游ゴシック Light</SelectText>
                <Caret />
              </SelectBox>
              <SelectBox $w={57} $ml={-1}>
                <SelectText $mr={10}>10.5</SelectText>
                <Caret />
              </SelectBox>
              <Tool $w={24} $ml={5}><GrowIcon /></Tool>
              <Tool $w={20} $ml={7}><ShrinkIcon /></Tool>
              <ToolSep $ml={9} />
              <Tool $w={25} $ml={7} $size={20}>Aa</Tool>
              <Tool $w={7} $ml={3}><Caret /></Tool>
              <ToolSep $ml={10} />
              <Tool $w={22} $ml={11}><EraserIcon /></Tool>
              <Tool $w={14} $ml={9}><FuriganaIcon /></Tool>
              <Tool $w={24} $ml={10}><TextBorderIcon /></Tool>
            </ToolRow>
            <ToolRow $mt={11}>
              <Tool $w={14} $ml={12} $bold $size={22}>B</Tool>
              <Tool $w={12} $ml={16} $italic $size={22}>I</Tool>
              <Tool $w={15} $ml={17} $size={21}><Underlined>U</Underlined></Tool>
              <Tool $w={8} $ml={12}><Caret /></Tool>
              <Tool $w={24} $ml={6} $size={16}><s>abc</s></Tool>
              <Tool $w={20} $ml={10} $size={21}>X<ToolSub>2</ToolSub></Tool>
              <Tool $w={20} $ml={10} $size={21}>X<ToolSup>2</ToolSup></Tool>
              <ToolSep $ml={7} />
              <Tool $w={19} $ml={10}><TextEffectIcon /></Tool>
              <Tool $w={7} $ml={7}><Caret /></Tool>
              <Tool $w={24} $ml={8}><HighlightIcon /></Tool>
              <Tool $w={7} $ml={7}><Caret /></Tool>
              <Tool $w={24} $ml={7}><FontColorIcon /></Tool>
              <Tool $w={7} $ml={7}><Caret /></Tool>
              <Tool $w={21} $ml={8}><ShadeIcon /></Tool>
              <Tool $w={22} $ml={9}><EnclosedIcon /></Tool>
            </ToolRow>
          </GroupBody>
          <GroupFoot>
            <GroupLabel>フォント</GroupLabel>
            <Launcher><LauncherIcon /></Launcher>
          </GroupFoot>
        </Group>

        <Group $w={344}>
          <GroupBody>
            <ToolRow $mt={12}>
              <Tool $w={22} $ml={9}><BulletsIcon /></Tool>
              <Tool $w={7} $ml={8}><Caret /></Tool>
              <PressedTools>
                <Tool $w={19} $ml={4}><NumberedIcon /></Tool>
                <Tool $w={7} $ml={11}><Caret color="#444" /></Tool>
                <Tool $w={18} $ml={8}><MultilevelIcon /></Tool>
                <Tool $w={7} $ml={10}><Caret color="#444" /></Tool>
              </PressedTools>
              <ToolSep $ml={4} />
              <Tool $w={23} $ml={7}><IndentIcon out /></Tool>
              <Tool $w={23} $ml={8}><IndentIcon /></Tool>
              <ToolSep $ml={7} />
              <Tool $w={23} $ml={8}><DirectionIcon /></Tool>
              <Tool $w={7} $ml={5}><Caret /></Tool>
              <ToolSep $ml={9} />
              <Tool $w={18} $ml={11}><SortIcon /></Tool>
              <ToolSep $ml={9} />
              <Tool $w={20} $ml={9}><ParaMarkIcon /></Tool>
            </ToolRow>
            <ToolRow $mt={11}>
              <Tool $w={20} $ml={10}><AlignIcon mode="l" /></Tool>
              <Tool $w={20} $ml={10}><AlignIcon mode="c" /></Tool>
              <Tool $w={20} $ml={10}><AlignIcon mode="r" /></Tool>
            </ToolRow>
          </GroupBody>
          <GroupFoot>
            <GroupLabel>段落</GroupLabel>
            <Launcher><LauncherIcon /></Launcher>
          </GroupFoot>
        </Group>

        <Group $w={578}>
          <GroupBody>
            <Gallery>
              <GalleryItems>
                {STYLE_CELLS.map(c => (
                  <StyleCell key={c.name} $on={c.on}>
                    <StylePreview $pl={c.pl}>
                      {c.mark && <StyleMark $w={c.markW ?? 0}>{c.mark}</StyleMark>}
                      あア亜
                    </StylePreview>
                    <StyleName>{c.name}</StyleName>
                  </StyleCell>
                ))}
              </GalleryItems>
              <GalleryScroll>
                <GalleryBtn $h={32} $off><Caret w={9} up color="#c0c0c0" /></GalleryBtn>
                <GalleryBtn $h={29}><Caret w={9} /></GalleryBtn>
                <GalleryBtn $h={29}><MoreIcon color={ICON} /></GalleryBtn>
              </GalleryScroll>
            </Gallery>
          </GroupBody>
          <GroupFoot>
            <GroupLabel>スタイル</GroupLabel>
            <Launcher><LauncherIcon /></Launcher>
          </GroupFoot>
        </Group>

        <Group $w={97}>
          <EditCol>
            <EditRow><EditIcon><FindIcon /></EditIcon>検索<Slot $ml={13}><Caret /></Slot></EditRow>
            <EditRow><EditIcon><ReplaceIcon /></EditIcon>置換</EditRow>
            <EditRow><EditIcon><SelectIcon /></EditIcon>選択<Slot $ml={7}><Caret /></Slot></EditRow>
          </EditCol>
          <GroupFoot>
            <GroupLabel>編集</GroupLabel>
          </GroupFoot>
        </Group>
        <Collapse><CollapseIcon /></Collapse>
      </Ribbon>

      <Body>
        <NavPane>
          <NavHead>
            <NavTitle>ナビゲーション</NavTitle>
            <Caret w={13} color="#777" />
            <NavClose><NavCloseIcon /></NavClose>
          </NavHead>
          <NavPanel>
            <NavSearch>
              <NavSearchText>文書の検索</NavSearchText>
              <FindIcon size={15} color={BLUE} />
              <Slot $ml={10}><Caret /></Slot>
            </NavSearch>
            <NavTabs>
              <NavTab $on $w={51}>見出し</NavTab>
              <NavTabSep $ml={11} />
              <NavTab $w={70}>ページ</NavTab>
              <NavTabSep />
              <NavTab $w={60}>結果</NavTab>
            </NavTabs>
            <NavScrollUp><NavTopIcon /></NavScrollUp>
            <NavTree>
              <NavItem $indent={44}><NavNum>1</NavNum>街の説明</NavItem>
              <NavItem $indent={44}><NavNum>2</NavNum>街の名産品･特産品</NavItem>
              <NavItem $indent={44}>
                <NavArrow><NavCorner /></NavArrow>
                <NavNum>3</NavNum>街の名前･好きな場所
              </NavItem>
              <NavItem $indent={64}>(ア) 有名な場所</NavItem>
              <NavItem $indent={58} $on>(イ) 景色のきれいな場所</NavItem>
            </NavTree>
          </NavPanel>
        </NavPane>

        <DocColumn>
          <DocArea>
            <Page>
              {BODY_LINES.map((line, i) => (
                <BodyRow key={i}>
                  <Bullet />
                  <RowText>{line}</RowText>
                  <Ret>↵</Ret>
                </BodyRow>
              ))}
              <HeadRow $h={41}>
                <Toggle><ToggleMark /></Toggle>
                <NumBlock $w={48} $ml={16}><HeadNum>1</HeadNum></NumBlock>
                <RowText>街の説明</RowText><Ret>↵</Ret>
              </HeadRow>
              <HeadRow $h={40}>
                <Toggle><ToggleMark /></Toggle>
                <NumBlock $w={48} $ml={16}><HeadNum>2</HeadNum></NumBlock>
                <RowText>街の名産品・特産品</RowText><Ret>↵</Ret>
              </HeadRow>
              <HeadRow $h={41}>
                <Toggle><ToggleMark plus /></Toggle>
                <NumBlock $w={48} $ml={16}><HeadNum>3</HeadNum></NumBlock>
                <RowText>街の名前・好きな場所</RowText><Ret>↵</Ret>
              </HeadRow>
              <SubRow>
                <Toggle><ToggleMark /></Toggle>
                <NumBlock $w={48} $ml={14}><SubNum>(ア)</SubNum></NumBlock>
                <RowText>有名な場所</RowText><Ret>↵</Ret>
              </SubRow>
              <SubRow>
                <Toggle><ToggleMark /></Toggle>
                <NumBlock $w={48} $ml={14}><SubNum $dark>(イ)</SubNum></NumBlock>
                <RowText>景色のきれいな場所</RowText><Ret>↵</Ret>
              </SubRow>
              <EndMark />
            </Page>
            <VScroll>
              <ScrollBtn $h={25}><Caret w={11} up color="#6e6e6e" /></ScrollBtn>
              <ScrollThumb $h={26} />
              <Track />
              <ScrollBtn $h={25}><Caret w={11} color="#6e6e6e" /></ScrollBtn>
            </VScroll>
          </DocArea>
          <HScroll>
            <ScrollBtn $w={24}><Caret w={11} side="l" color="#6e6e6e" /></ScrollBtn>
            <ScrollThumb $w={26} />
            <Track />
            <ScrollBtn $w={25}><Caret w={11} side="r" color="#6e6e6e" /></ScrollBtn>
            <HEnd />
          </HScroll>
        </DocColumn>
      </Body>

      <StatusBar>
        <StatusText $ml={8}>1/1 ページ</StatusText>
        <StatusText $ml={20}>78 文字</StatusText>
        <StatusIcon $ml={20}><ProofIcon /></StatusIcon>
        <StatusText $ml={21}>英語 (米国)</StatusText>
        <StatusRight>
          <ReadIcon />
          <StatusIcon $ml={26}><PrintIcon /></StatusIcon>
          <StatusIcon $ml={26}><WebIcon /></StatusIcon>
          <StatusIcon $ml={18}><ZoomOut /></StatusIcon>
          <ZoomTrack><ZoomThumb /></ZoomTrack>
          <StatusIcon $ml={5}><ZoomIn /></StatusIcon>
          <ZoomLabel>100%</ZoomLabel>
        </StatusRight>
      </StatusBar>

      <Menu>
        <MenuFilter>すべて<Caret w={11} color="#666" /></MenuFilter>
        <MenuHeader>現在のリスト</MenuHeader>
        <ThumbGrid>
          <Thumb><ThumbBody rows={heading('1 ', '(ア)', '①')} /></Thumb>
        </ThumbGrid>
        <MenuHeader $mt={6}>リスト ライブラリ</MenuHeader>
        <ThumbGrid>
          <ThumbNone>なし</ThumbNone>
          <Thumb><ThumbBody rows={plain([9, 16, 23], ['1', '1.1', '1.1.1'])} /></Thumb>
          <Thumb><ThumbBody rows={plain([9, 9, 9], ['1.', '1.1.', '1.1.1.'])} /></Thumb>
          <Thumb><ThumbBody rows={plain([13, 13, 13], ['1', '1 - 1', '1 - 1 - 1'])} /></Thumb>
          <Thumb $on><ThumbBody rows={heading('1 ', '(ア)', '①')} /></Thumb>
          <Thumb><ThumbBody rows={chapter(['第 1 章', '第 1 節', '第 1 項'])} /></Thumb>
          <Thumb><ThumbBody rows={chapter(['第一章', '第一節', '第一項'])} /></Thumb>
          <Thumb><ThumbBody rows={heading('1. ', 'a. ', 'i. ', 9, 16, 24, true)} /></Thumb>
        </ThumbGrid>
        <MenuDivider />
        <MenuItem $h={37}>
          <MenuItemIcon><LevelIcon /></MenuItemIcon>
          リストのレベルの変更(<Underlined>C</Underlined>)
          <MenuItemArrow><Caret w={12} side="r" color="#666" /></MenuItemArrow>
        </MenuItem>
        <MenuItem $h={36} $on>新しいアウトラインの定義(<Underlined>D</Underlined>)...</MenuItem>
        <MenuItem $h={35}>新しいリスト スタイルの定義(<Underlined>L</Underlined>)...</MenuItem>
        <MenuGrip><GripIcon /></MenuGrip>
      </Menu>

      <RedCircle width="490" height="94" viewBox="0 0 490 94">
        <ellipse cx="244.5" cy="46.5" rx="236" ry="38" fill="none" stroke="#ed1c24" strokeWidth="9" />
      </RedCircle>
    </Window>
  );
}
